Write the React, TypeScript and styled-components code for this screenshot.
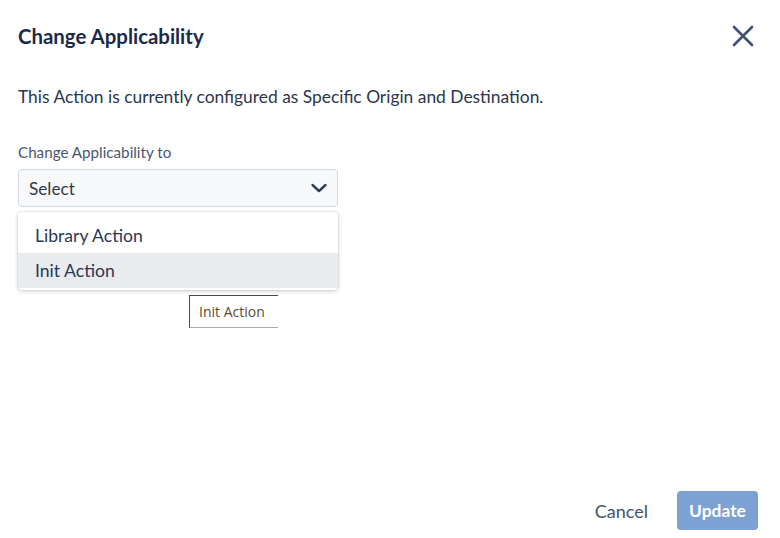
import styled, { createGlobalStyle } from 'styled-components';

const GlobalStyle = createGlobalStyle`
  html, body {
    margin: 0;
    padding: 0;
    background: #ffffff;
  }
  body {
    font-family: Lato, "Open Sans", sans-serif;
  }
`;

const Dialog = styled.div`
  position: relative;
  box-sizing: border-box;
  width: 780px;
  height: 538px;
  padding: 23px 22px 8px 18px;
  display: flex;
  flex-direction: column;
  color: #1e2b47;
`;

const Header = styled.div`
  display: flex;
  align-items: center;
  justify-content: space-between;
  height: 26px;
`;

const Title = styled.h2`
  margin: 0;
  font-size: 20.4px;
  font-weight: 700;
  color: #1c2a4a;
`;

const CloseButton = styled.button`
  border: 0;
  background: none;
  padding: 0;
  margin-right: 3px;
  width: 24px;
  height: 24px;
  display: flex;
  align-items: center;
  justify-content: center;
  cursor: pointer;
`;

const Message = styled.p`
  margin: 36px 0 0;
  font-size: 17.4px;
  line-height: 24px;
  color: #2b3650;
`;

const Field = styled.div`
  position: relative;
  margin-top: 34px;
  width: 320px;
`;

const Label = styled.label`
  display: block;
  font-size: 15.2px;
  line-height: 18px;
  color: #4a5671;
  margin-bottom: 8px;
`;

const SelectBox = styled.div`
  box-sizing: border-box;
  height: 38px;
  padding: 0 9px 0 10px;
  display: flex;
  align-items: center;
  justify-content: space-between;
  background: #f8f9fb;
  border: 1px solid #d6d9df;
  border-radius: 4px;
  font-size: 17.2px;
  color: #333a45;
`;

const Menu = styled.ul`
  list-style: none;
  margin: 5px 0 0;
  padding: 6px 0 2px;
  background: #ffffff;
  border-radius: 4px;
  box-shadow: 0 1px 4px rgba(20, 30, 55, 0.22), 0 0 0 1px rgba(20, 30, 55, 0.04);
`;

const MenuItem = styled.li<{ $active?: boolean }>`
  height: 35px;
  display: flex;
  align-items: center;
  padding: 0 17px;
  font-size: 17.6px;
  color: #2b3753;
  background: ${({ $active }) => ($active ? '#e9ebef' : 'transparent')};
`;

const Tooltip = styled.div`
  position: absolute;
  left: 171px;
  top: 152px;
  box-sizing: border-box;
  width: 89px;
  height: 33px;
  padding: 0 0 0 9px;
  display: flex;
  align-items: center;
  background: #ffffff;
  border-left: 1px solid #4a4a4a;
  border-top: 1px solid #4a4a4a;
  border-bottom: 1px solid #a9a9a9;
  font-family: "Open Sans", "Liberation Sans", sans-serif;
  font-size: 14px;
  color: #5a4a30;
  white-space: nowrap;
  overflow: hidden;
`;

const Footer = styled.div`
  margin-top: auto;
  display: flex;
  align-items: center;
  justify-content: flex-end;
  gap: 29px;
`;

const CancelButton = styled.button`
  border: 0;
  background: none;
  padding: 0;
  font-family: inherit;
  font-size: 18px;
  color: #46526c;
  cursor: pointer;
`;

const UpdateButton = styled.button`
  width: 81px;
  height: 39px;
  border: 0;
  border-radius: 4px;
  background: #7ea1d3;
  color: #ffffff;
  font-family: inherit;
  font-size: 17.4px;
  font-weight: 700;
  cursor: default;
`;

const App = () => (
  <>
    <GlobalStyle />
    <Dialog>
      <Header>
        <Title>Change Applicability</Title>
        <CloseButton aria-label="Close">
          <svg width="22" height="22" viewBox="0 0 22 22">
            <path d="M2 2 L20 20 M20 2 L2 20" stroke="#3f5173" strokeWidth="2.6" strokeLinecap="round" />
          </svg>
        </CloseButton>
      </Header>
      <Message>This Action is currently configured as Specific Origin and Destination.</Message>
      <Field>
        <Label>Change Applicability to</Label>
        <SelectBox>
          <span>Select</span>
          <svg width="18" height="12" viewBox="0 0 18 12">
            <path d="M2.5 3 L9 9 L15.5 3" stroke="#2e3d5c" strokeWidth="2.4" fill="none" strokeLinecap="round" strokeLinejoin="round" />
          </svg>
        </SelectBox>
        <Menu>
          <MenuItem>Library Action</MenuItem>
          <MenuItem $active>Init Action</MenuItem>
        </Menu>
        <Tooltip>Init Action</Tooltip>
      </Field>
      <Footer>
        <CancelButton>Cancel</CancelButton>
        <UpdateButton>Update</UpdateButton>
      </Footer>
    </Dialog>
  </>
);

export default App;
